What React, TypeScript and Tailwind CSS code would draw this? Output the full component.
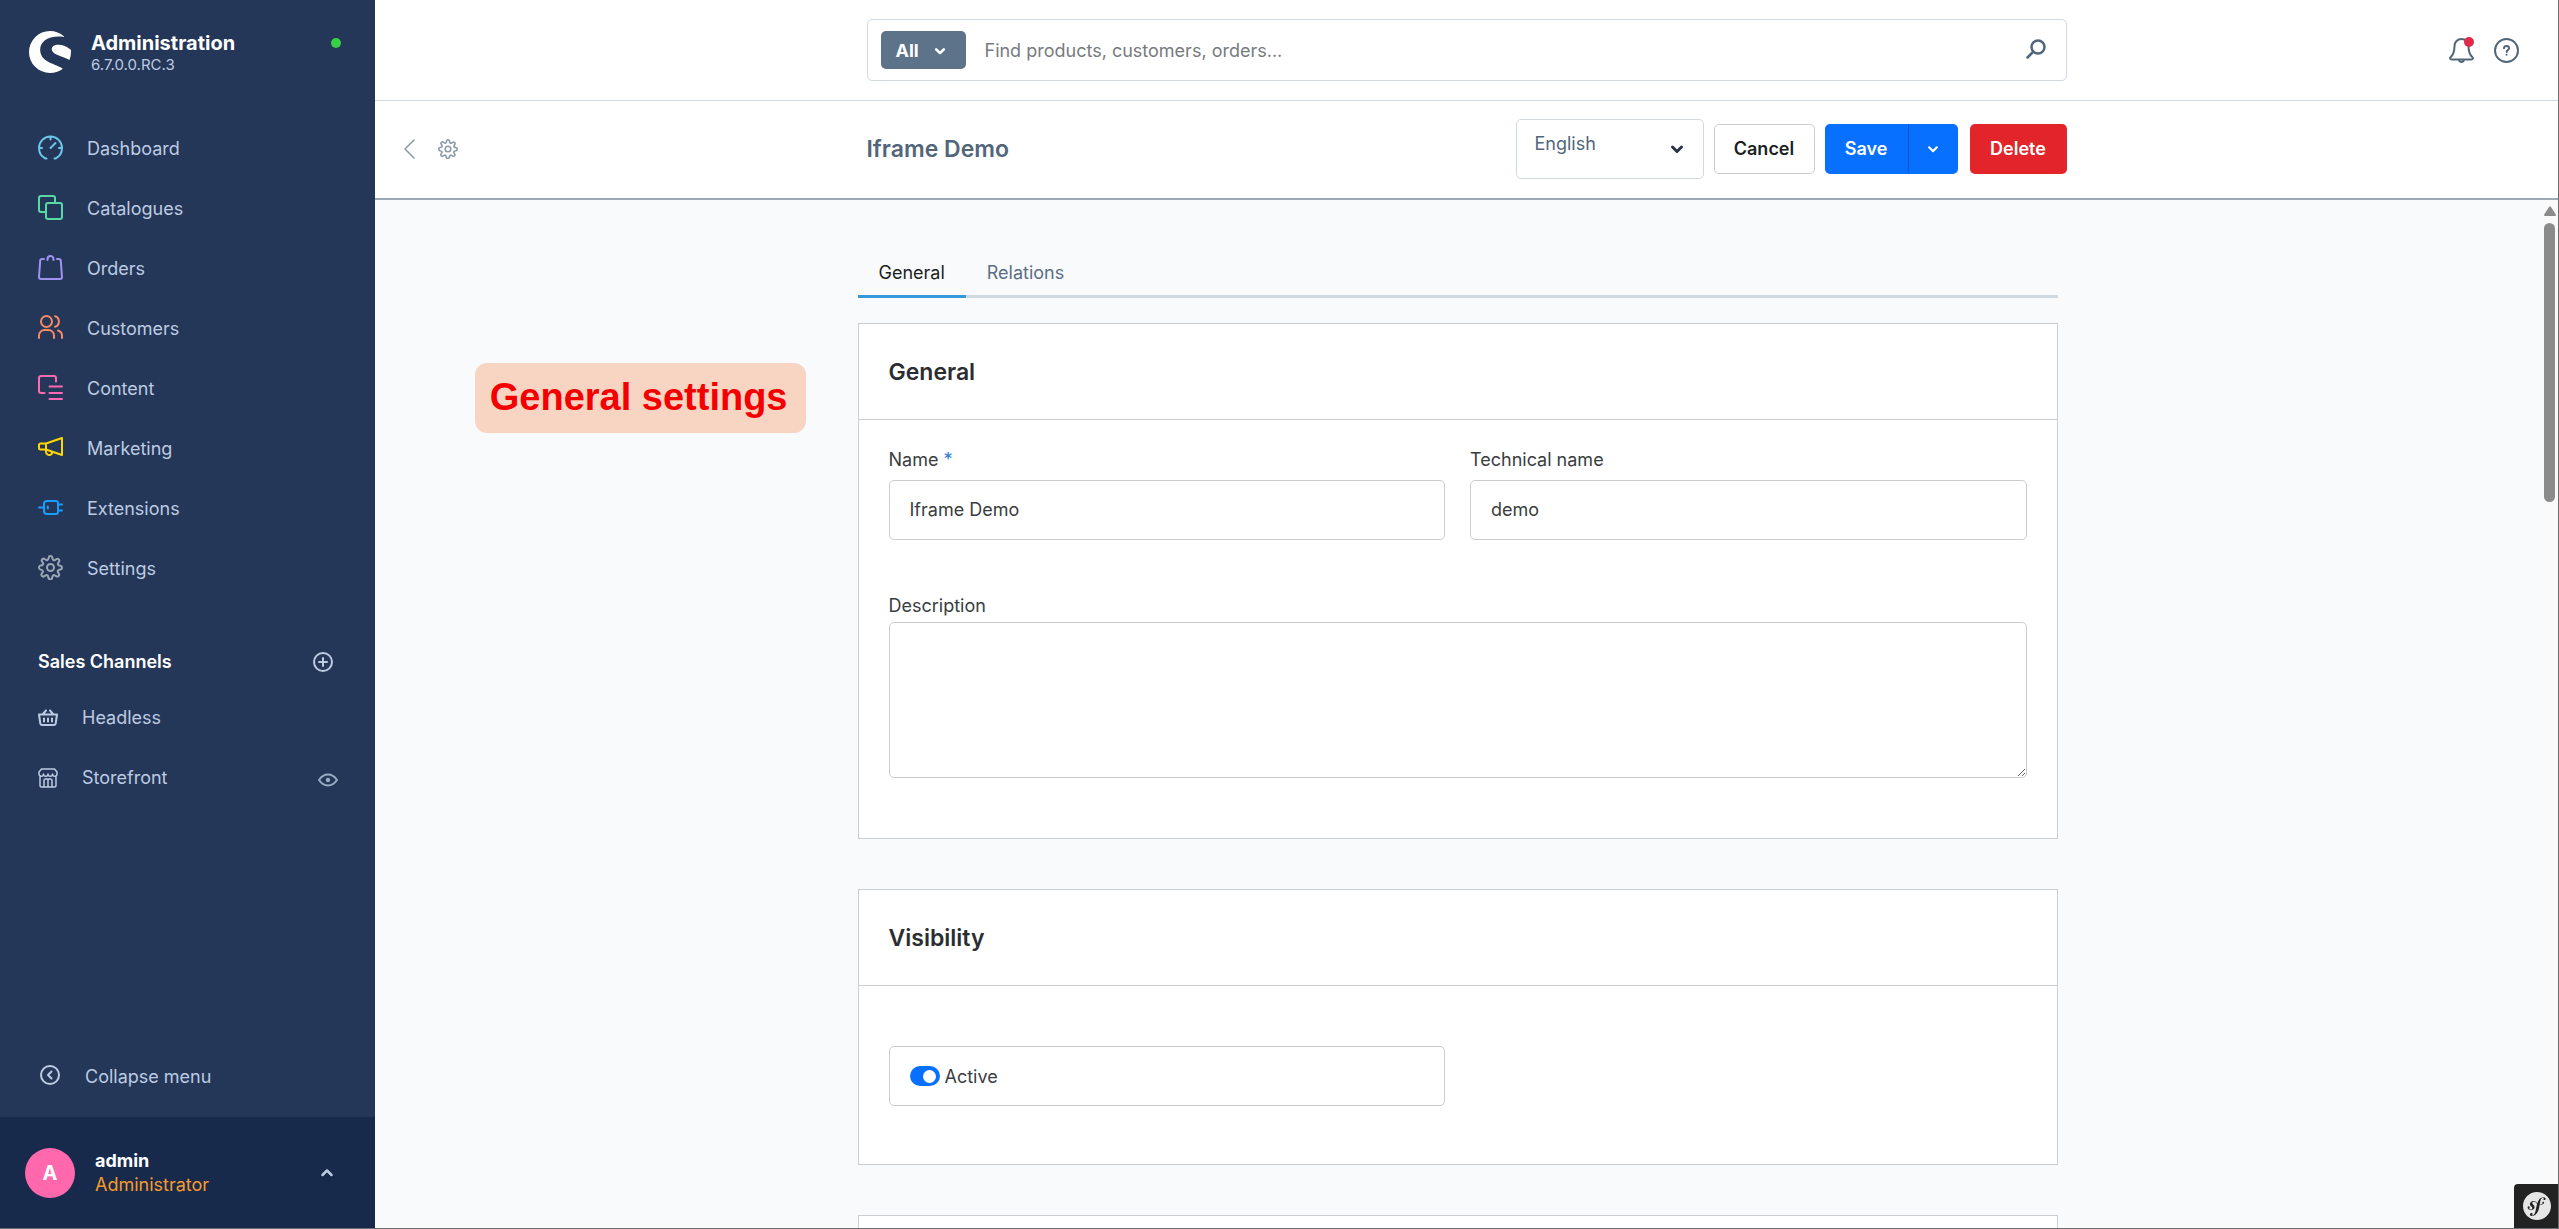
import { useState, type ReactNode } from "react";
import { SiShopware, SiSymfony } from "react-icons/si";

type IconProps = { className?: string };

function Svg({ className, size = 25, width = 2, children }: IconProps & { size?: number; width?: number; children: ReactNode }) {
  return (
    <svg
      width={size}
      height={size}
      viewBox={`0 0 ${size} ${size}`}
      fill="none"
      stroke="currentColor"
      strokeWidth={width}
      strokeLinecap="round"
      strokeLinejoin="round"
      className={`shrink-0 ${className ?? ""}`}
      aria-hidden="true"
    >
      {children}
    </svg>
  );
}

const gearPath =
  "M12.5 1c1 0 1.7.7 1.9 1.6l.3 1.5c.1.5.5.9 1 1.1.5.2 1 .1 1.4-.2l1.3-.8c.8-.6 1.8-.4 2.4.2.6.7.7 1.7.2 2.4l-.8 1.3c-.3.4-.4 1-.2 1.4.2.5.6.9 1.1 1l1.3.3c1 .2 1.6 1 1.6 1.9 0 1-.7 1.7-1.6 1.9l-1.5.3c-.5.1-.9.5-1.1 1-.2.5-.1 1 .2 1.4l.8 1.3c.6.8.4 1.8-.2 2.4-.7.6-1.7.7-2.4.2l-1.3-.8c-.4-.3-1-.4-1.4-.2-.5.2-.9.6-1 1.1l-.3 1.5c-.2.9-1 1.6-1.9 1.6s-1.7-.7-1.9-1.6l-.3-1.5c-.1-.5-.5-.9-1-1.1-.5-.2-1-.1-1.4.2l-1.3.8c-.8.6-1.8.4-2.4-.2-.6-.7-.7-1.7-.2-2.4l.8-1.3c.3-.4.4-1 .2-1.4-.2-.5-.6-.9-1.1-1l-1.2-.3C1.5 14.200 1 13.400 1 12.500c0-1 .7-1.700 1.600-1.900l1.400-.3c.5-.1.9-.5 1.100-1 .2-.5.1-1-.2-1.400l-.8-1.300c-.6-.8-.4-1.800.2-2.400.7-.6 1.700-.7 2.400-.2l1.300.8c.4.3 1 .4 1.400.2.5-.2.9-.6 1-1.100l.3-1.300C10.800 1.700 11.600 1 12.500 1z";

function DashboardIcon() {
  return (
    <Svg>
      <path d="M8.500 23.500H7.500C3.500 21.500 1 17.500 1 13a11.500 11.500 0 0 1 23 0c0 4.500-2.500 8.500-6.500 10.500h-1M12.500 1.500v3M1.500 13H4M21 13h2.500M12.500 13l5-5" />
    </Svg>
  );
}

function CatalogueIcon() {
  return (
    <Svg>
      <rect x="8" y="8" width="16" height="16" rx="2" />
      <path d="M8 17H3a2 2 0 0 1-2-2V3a2 2 0 0 1 2-2h12a2 2 0 0 1 2 2v5" />
    </Svg>
  );
}

function OrdersIcon() {
  return (
    <Svg>
      <path d="M6 4H4.200a2 2 0 0 0-2 1.900L1 22a2 2 0 0 0 2 2h19a2 2 0 0 0 2-2L22.800 5.900a2 2 0 0 0-2-1.900H19M9.500 5V4a3 3 0 0 1 6 0v1M9.500 4h.2M15.300 4h.2" />
    </Svg>
  );
}

function CustomersIcon() {
  return (
    <Svg>
      <circle cx="8.500" cy="6.500" r="5.500" />
      <path d="M1 23v-2.500A5.500 5.500 0 0 1 6.500 15h4a5.500 5.500 0 0 1 5.500 5.500V23M17 1.200c5.200 1.300 5.200 9.300 0 10.600M20 15.500c2.500.8 4 2.800 4 5V23" />
    </Svg>
  );
}

function ContentIcon() {
  return (
    <Svg>
      <path d="M6.500 18H3a2 2 0 0 1-2-2V3a2 2 0 0 1 2-2h13a2 2 0 0 1 2 2v3.500M11.500 11.500H24M11.500 18H24M11.500 24H24" />
    </Svg>
  );
}

function MarketingIcon() {
  return (
    <Svg>
      <path d="M2.500 8.500H8L24 3v17L8 14.500H2.500A1.500 1.500 0 0 1 1 13v-3a1.500 1.500 0 0 1 1.500-1.500zM8 8.500v6M8 15v1.500c0 2.500 2 3.800 4 3.500 1.500-.3 2.200-1.500 2-3" />
    </Svg>
  );
}

function ExtensionsIcon() {
  return (
    <Svg>
      <path d="M9 6h9a2 2 0 0 1 2 2v9a2 2 0 0 1-2 2H9a3 3 0 0 1-3-3V9a3 3 0 0 1 3-3zM1 12.500h5M20 9.500h4M20 15.500h4M9.800 11.500v2" />
    </Svg>
  );
}

function SettingsIcon({ className }: IconProps) {
  return (
    <Svg className={className}>
      <path d={gearPath} />
      <circle cx="12.500" cy="12.500" r="3.500" />
    </Svg>
  );
}

function Chevron({ className, width = 3 }: IconProps & { width?: number }) {
  return (
    <Svg size={14} width={width} className={className}>
      <path d="M2.500 5 7 9.500 11.500 5" />
    </Svg>
  );
}

const navItems = [
  { label: "Dashboard", color: "text-[#6cc5ea]", icon: <DashboardIcon /> },
  { label: "Catalogues", color: "text-[#57d9a3]", icon: <CatalogueIcon /> },
  { label: "Orders", color: "text-[#a092f0]", icon: <OrdersIcon /> },
  { label: "Customers", color: "text-[#f88962]", icon: <CustomersIcon /> },
  { label: "Content", color: "text-[#ff68b4]", icon: <ContentIcon /> },
  { label: "Marketing", color: "text-[#ffd700]", icon: <MarketingIcon /> },
  { label: "Extensions", color: "text-[#189eff]", icon: <ExtensionsIcon /> },
  { label: "Settings", color: "text-[#9aa8b5]", icon: <SettingsIcon /> },
];

function Sidebar() {
  return (
    <aside className="flex w-[375px] shrink-0 flex-col bg-[#243758] text-[#bdcbe2]">
      <header className="flex h-[118px] items-start px-[29px] pt-[31px]">
        <SiShopware className="size-[42px] shrink-0 text-white" />
        <div className="ml-5 flex-1">
          <p className="text-xl leading-6 font-bold text-white">Administration</p>
          <p className="text-[15px] leading-5">6.7.0.0.RC.3</p>
        </div>
        <span className="mt-[7px] mr-[5px] size-[10px] rounded-full bg-[#37d046]" />
      </header>

      <nav aria-label="Main">
        {navItems.map((item) => (
          <a key={item.label} href="#" className="flex h-[60px] items-start gap-6 px-[38px] pt-[17px]">
            <span className={item.color}>{item.icon}</span>
            <span className="leading-7">{item.label}</span>
          </a>
        ))}
      </nav>

      <section className="mt-[38px] flex-1">
        <div className="flex h-[52px] items-center justify-between pr-[42px] pl-[38px]">
          <h2 className="font-semibold text-white">Sales Channels</h2>
          <button type="button" aria-label="Add sales channel">
            <Svg size={20}>
              <circle cx="10" cy="10" r="9" />
              <path d="M10 6v8M6 10h8" />
            </Svg>
          </button>
        </div>
        <a href="#" className="flex h-[60px] items-center gap-6 px-[38px]">
          <Svg size={20} width={2}>
            <path d="M1 6.500h18l-1.300 9a2 2 0 0 1-2 1.500H4.300a2 2 0 0 1-2-1.500zM5 6l3-3.500M15 6l-3-3.500M6 10.500v3M10 10.500v3M14 10.500v3" />
          </Svg>
          <span>Headless</span>
        </a>
        <div className="flex h-[60px] items-center pr-[37px] pl-[38px]">
          <a href="#" className="flex flex-1 items-center gap-6">
            <Svg size={20} width={1.5}>
              <path d="M2 8v9.500A1.500 1.500 0 0 0 3.500 19h13a1.500 1.500 0 0 0 1.500-1.500V8M3.500 1h13L19 4v2a2.200 2.200 0 0 1-4.500 0 2.200 2.200 0 0 1-4.500 0 2.200 2.200 0 0 1-4.500 0A2.200 2.200 0 0 1 1 6V4zM6 19v-6.500a1.500 1.500 0 0 1 1.500-1.500h5a1.500 1.500 0 0 1 1.500 1.500V19M10 11v8" />
            </Svg>
            <span>Storefront</span>
          </a>
          <button type="button" aria-label="Open storefront" className="mt-1 text-[#9aabc4]">
            <Svg size={20}>
              <path d="M1 10c2.500-3.700 5.500-5.500 9-5.500s6.500 1.800 9 5.500c-2.500 3.700-5.500 5.500-9 5.500S3.500 13.700 1 10z" />
              <circle cx="10" cy="10" r="1.200" fill="currentColor" />
            </Svg>
          </button>
        </div>
      </section>

      <button type="button" className="mb-[10px] flex h-[60px] items-center gap-[25px] px-10">
        <Svg size={20} width={2} className="mb-1">
          <circle cx="10" cy="10" r="9" />
          <path d="M11.500 6.500 8 10l3.500 3.500" />
        </Svg>
        <span>Collapse menu</span>
      </button>

      <button type="button" className="flex h-[111px] items-center bg-[#172a4c] pr-[41px] pl-[25px] text-left">
        <span className="flex size-[50px] items-center justify-center rounded-full bg-[#ff68ac] text-xl font-bold text-white">A</span>
        <span className="ml-5 flex flex-1 flex-col">
          <span className="font-bold text-white">admin</span>
          <span className="text-[#f89a2b]">Administrator</span>
        </span>
        <Chevron className="rotate-180" width={2.5} />
      </button>
    </aside>
  );
}

function SearchBar() {
  return (
    <div className="grid h-[101px] shrink-0 grid-cols-[1fr_minmax(0,1200px)_1fr] items-center border-b border-[#d1d9e0] bg-white">
      <form role="search" className="col-start-2 flex h-[62px] items-center rounded-[5px] border border-[#d1d9e0] px-[13px]">
        <button type="button" className="flex h-[38px] w-[85px] items-center justify-between rounded-[5px] bg-[#5c738a] pt-px pr-5 pl-[15px] font-bold text-white">
          All
          <Chevron className="size-3" />
        </button>
        <input
          type="search"
          aria-label="Search"
          placeholder="Find products, customers, orders..."
          className="ml-[19px] min-w-0 flex-1 pt-[2px] outline-none placeholder:text-[#777b80] placeholder:opacity-100"
        />
        <button type="submit" aria-label="Submit search" className="mr-[7px] mb-[2px] text-[#52667a]">
          <Svg size={20} width={2.5}>
            <circle cx="12" cy="8" r="6.500" />
            <path d="m7 13-5.500 5.500" />
          </Svg>
        </button>
      </form>
      <div className="flex items-center justify-end gap-5 pt-px pr-[39px] text-[#52667a]">
        <button type="button" aria-label="Notifications" className="relative">
          <Svg>
            <path d="M12.500 1C8.500 1 5.500 4 5.500 8c0 5-.5 8-3.700 11-1.300 1.200-.8 2.500 1 2.500h19.400c1.800 0 2.300-1.300 1-2.500-3.200-3-3.700-6-3.700-11 0-4-3-7-7-7zM10 22c.3 2.700 4.700 2.700 5 0" />
          </Svg>
          <span className="absolute -top-px right-0 size-[10px] rounded-full bg-[#de294c]" />
        </button>
        <button type="button" aria-label="Help">
          <Svg>
            <circle cx="12.500" cy="12.500" r="11.500" />
            <path d="M10 10.300c.2-3.100 5-3 5 0 0 1.700-2.300 1.700-2.300 3.700M12.600 16.700v.1" />
          </Svg>
        </button>
      </div>
    </div>
  );
}

function Toolbar() {
  return (
    <div className="grid h-[99px] shrink-0 grid-cols-[1fr_minmax(0,1200px)_1fr] items-center border-b-2 border-[#9aa8b8] bg-white pb-px">
      <div className="flex items-center gap-[18px] pl-[25px] text-[#8a9aab]">
        <a href="#" aria-label="Back">
          <Svg size={20}>
            <path d="m14 1-9 9 9 9" strokeWidth="1.500" />
          </Svg>
        </a>
        <a href="#" aria-label="Settings">
          <SettingsIcon className="size-5" />
        </a>
      </div>
      <div className="flex items-center">
        <h1 className="flex-1 text-[23px] font-semibold text-[#52667a]">Iframe Demo</h1>
        <div className="mr-[10px] grid items-center">
          <select
            aria-label="Language"
            className="col-start-1 row-start-1 h-[60px] w-[188px] appearance-none rounded-[5px] border border-[#d1d9e0] bg-white pb-[10px] pl-[18px] text-[#52667a]"
          >
            <option>English</option>
          </select>
          <Chevron className="pointer-events-none col-start-1 row-start-1 mr-5 justify-self-end text-[#2a3345]" />
        </div>
        <button type="button" className="mr-[10px] h-[50px] w-[101px] rounded-[5px] border border-[#c9cdd1] bg-white font-semibold text-[#1b1f23]">
          Cancel
        </button>
        <div className="mr-3 flex font-semibold text-white">
          <button type="button" className="h-[50px] w-[84px] rounded-l-[5px] border-r border-[#0559cc] bg-[#0870ff]">
            Save
          </button>
          <button type="button" aria-label="More save options" className="flex h-[50px] w-[49px] items-center justify-center rounded-r-[5px] bg-[#0870ff]">
            <Chevron width={2.5} className="size-3" />
          </button>
        </div>
        <button type="button" className="h-[50px] w-[97px] rounded-[5px] bg-[#e2252b] font-semibold text-white">
          Delete
        </button>
      </div>
    </div>
  );
}

function Card({ title, children }: { title?: string; children?: ReactNode }) {
  return (
    <section className="border border-[#cbced3] bg-white">
      <div className="flex h-24 items-center border-b border-[#cbced3] px-[30px]">
        {title && <h2 className="text-[23px] font-semibold text-[#2b2d30]">{title}</h2>}
      </div>
      {children}
    </section>
  );
}

const fieldClass = "w-full rounded-[5px] border border-[#c9cdd1] bg-white px-5 text-[#3a3d40]";

function App() {
  const [tab, setTab] = useState("General");
  const [active, setActive] = useState(true);

  return (
    <div className="flex h-screen border-r border-b border-[#6b6d70] font-['Inter',sans-serif] text-lg leading-6">
      <Sidebar />
      <div className="relative flex min-w-0 flex-1 flex-col">
        <SearchBar />
        <Toolbar />
        <div className="flex min-h-0 flex-1 bg-[#f9fafc]">
          <main className="grid min-w-0 flex-1 grid-cols-[1fr_minmax(0,1200px)_1fr] items-start overflow-hidden">
            <div className="mt-[163px] mr-[52px] justify-self-end rounded-xl bg-[#f8d5c2] pt-3 pr-[18px] pb-[14px] pl-[15px]">
              <p className="font-['Liberation_Sans',Arial,sans-serif] text-[38px] leading-[44px] font-bold whitespace-nowrap text-[#f50000]">
                General settings
              </p>
            </div>

            <div className="flex flex-col pt-[50px]">
              <div role="tablist" className="mb-[25px] flex h-12 shadow-[inset_0_-3px_#d1d9e0]">
                {["General", "Relations"].map((name) => (
                  <button
                    key={name}
                    type="button"
                    role="tab"
                    aria-selected={tab === name}
                    onClick={() => setTab(name)}
                    className={
                      tab === name
                        ? "border-b-[3px] border-[#3498db] px-[21px] text-[#1b1f23]"
                        : "border-b-[3px] border-transparent px-[21px] text-[#5c6f85]"
                    }
                  >
                    {name}
                  </button>
                ))}
              </div>

              <div className="flex flex-col gap-[50px]">
                <Card title="General">
                  <div className="px-[30px] pt-7 pb-[60px] text-[#3a3d40]">
                    <div className="grid grid-cols-2 gap-[25px]">
                      <div>
                        <label htmlFor="name" className="mb-2 block">
                          Name <span className="text-[#2f7de0]">*</span>
                        </label>
                        <input id="name" defaultValue="Iframe Demo" className={`h-[60px] pb-[2px] ${fieldClass}`} />
                      </div>
                      <div>
                        <label htmlFor="technical-name" className="mb-2 block">
                          Technical name
                        </label>
                        <input id="technical-name" defaultValue="demo" className={`h-[60px] pb-[2px] ${fieldClass}`} />
                      </div>
                    </div>
                    <label htmlFor="description" className="mt-[54px] mb-1 block">
                      Description
                    </label>
                    <textarea id="description" className={`block h-[156px] py-4 ${fieldClass}`} />
                  </div>
                </Card>

                <Card title="Visibility">
                  <div className="grid grid-cols-2 gap-[25px] px-[30px] pt-[60px] pb-[58px]">
                    <label className={`flex h-[60px] items-center gap-[5px] ${fieldClass}`}>
                      <input
                        type="checkbox"
                        role="switch"
                        checked={active}
                        onChange={(e) => setActive(e.target.checked)}
                        className="flex h-5 w-[30px] appearance-none items-center rounded-full bg-[#c2c9d1] px-1 before:size-[13px] before:rounded-full before:bg-white before:content-[''] checked:justify-end checked:bg-[#0870ff]"
                      />
                      <span className="pt-[2px]">Active</span>
                    </label>
                  </div>
                </Card>

                <Card />
              </div>
            </div>
          </main>

          {/* scrollbar */}
          <div aria-hidden="true" className="flex w-[18px] shrink-0 flex-col items-center bg-[#fafafa] pt-[6px] pl-px">
            <svg width="12" height="10" viewBox="0 0 12 10" fill="#8b8b8b">
              <path d="M5.200.8 .3 8.200C-.2 9.100.2 10 1.200 10h9.600c1 0 1.400-.9.900-1.800L6.800.8c-.4-.7-1.200-.7-1.600 0z" />
            </svg>
            <div className="mt-[7px] h-[279px] w-[11px] rounded-full bg-[#8b8b8b]" />
          </div>
        </div>

        <button
          type="button"
          aria-label="Show Symfony toolbar"
          className="absolute right-0 bottom-0 flex size-11 items-center justify-center rounded-tl-[4px] bg-[#222222] pl-px text-[#e6e6e6]"
        >
          <SiSymfony className="size-7" />
        </button>
      </div>
    </div>
  );
}

export default App;
